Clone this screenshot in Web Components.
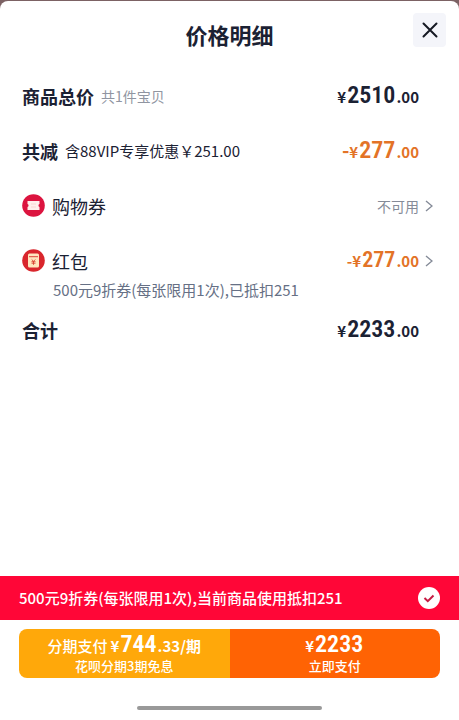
<!DOCTYPE html>
<html lang="zh-CN">
<head>
<meta charset="utf-8">
<meta name="viewport" content="width=device-width, initial-scale=1">
<title>价格明细</title>
<style>
html, body { height: 100%; margin: 0; }
body {
  background: #7c6264;
  color: #1b2133;
  font-family: "Noto Sans CJK SC", "Noto Sans", sans-serif;
  --num: "Liberation Sans Narrow", "Roboto Condensed", "Noto Sans CJK SC", sans-serif;
}
</style>
</head>
<body>
<price-sheet heading="价格明细">
  <price-row strong label="商品总价">
    <span slot="hint" class="muted">共1件宝贝</span>
    <money-text slot="value" whole="2510" cents=".00"></money-text>
  </price-row>
  <price-row strong label="共减">
    <span slot="hint">含88VIP专享优惠￥251.00</span>
    <money-text slot="value" discount sign="-" whole="277" cents=".00"></money-text>
  </price-row>
  <price-row label="购物券" link>
    <coupon-icon slot="icon"></coupon-icon>
    <span slot="value">不可用</span>
  </price-row>
  <price-row label="红包" link note="500元9折券(每张限用1次),已抵扣251">
    <packet-icon slot="icon"></packet-icon>
    <money-text slot="value" discount compact sign="-" whole="277" cents=".00"></money-text>
  </price-row>
  <price-row strong label="合计">
    <money-text slot="value" whole="2233" cents=".00"></money-text>
  </price-row>
  <coupon-banner slot="footer">500元9折券(每张限用1次),当前商品使用抵扣251</coupon-banner>
  <pay-bar slot="footer"></pay-bar>
</price-sheet>

<script>
class Base extends HTMLElement {
  connectedCallback() {
    if (!this.shadowRoot) this.attachShadow({ mode: "open" }).innerHTML = this.view();
  }
  at(name) { return this.getAttribute(name) || ""; }
}

customElements.define("money-text", class extends Base {
  view() {
    return `<style>
      :host { display: inline-flex; align-items: baseline; white-space: nowrap; color: var(--money, #1b2133);
        font-weight: 700; font-size: 15px; line-height: 24px; }
      :host([discount]) { color: #e37327; }
      .sign { font-size: 20px; }
      b { font-family: var(--num); font-size: 24px; font-weight: 600; margin-left: 1px; }
      :host([compact]) .sign { font-size: 15px; }
      :host([compact]) b { font-size: 22px; }
      .cents { margin-left: 1px; }
    </style>${this.at("sign") ? `<span class="sign">${this.at("sign")}</span>` : ""}<span>¥</span><b>${this.at("whole")}</b><span class="cents">${this.at("cents")}</span>`;
  }
});

customElements.define("coupon-icon", class extends Base {
  view() {
    return `<style>:host { display: block; } svg { display: block; }</style>
    <svg width="23" height="23" viewBox="0 0 23 23" aria-hidden="true">
      <circle cx="11.5" cy="11.5" r="11.3" fill="#dc143f"/>
      <path d="M5.5 7h12v3a1.6 1.6 0 0 0 0 3v3h-12v-3a1.6 1.6 0 0 0 0-3z" fill="#fff0ec"/>
      <path d="M9 10h5M9 13h5" stroke="#fad6d2" stroke-width="1"/>
    </svg>`;
  }
});

customElements.define("packet-icon", class extends Base {
  view() {
    return `<style>:host { display: block; } svg { display: block; }</style>
    <svg width="23" height="23" viewBox="0 0 23 23" aria-hidden="true">
      <circle cx="11.5" cy="11.5" r="11.3" fill="#d9262c"/>
      <rect x="6" y="4.5" width="11" height="14" rx="1.5" fill="#ffe6bd"/>
      <path d="M7 7.7h9" stroke="#d9463a" stroke-width="1"/>
      <path d="M9.7 10.5l1.8 1.8 1.8-1.8M11.5 12.3v3.5M9.5 12.7h4M9.5 14.2h4" fill="none" stroke="#d9402f" stroke-width=".9"/>
    </svg>`;
  }
});

customElements.define("price-row", class extends Base {
  view() {
    const link = this.hasAttribute("link");
    const tag = link ? "button" : "div";
    return `<style>
      :host { display: block; }
      .line { box-sizing: border-box; width: 100%; height: 55px; display: grid;
        grid-template-columns: minmax(0, 1fr) auto 8px; align-items: center; column-gap: 6px;
        padding: 0; border: 0; background: none; color: inherit; font: inherit; text-align: left; }
      button { cursor: pointer; }
      .left { display: flex; align-items: center; gap: 7px; white-space: nowrap; font-size: 18px; line-height: 26px; }
      :host([strong]) .label { font-weight: 700; }
      ::slotted([slot=hint]) { font-size: 15px; }
      ::slotted(.muted) { font-size: 14px; color: #9095a1; }
      ::slotted(span[slot=value]) { font-size: 14px; color: #858b98; }
      p { margin: -8px 0 0 31px; padding-bottom: 2px; font-size: 15px; line-height: 20px; color: #667085; }
      svg { display: block; }
    </style>
    <${tag} class="line">
      <span class="left"><slot name="icon"></slot><span class="label">${this.at("label")}</span><slot name="hint"></slot></span>
      <slot name="value"></slot>
      ${link ? `<svg width="8" height="12" viewBox="0 0 8 12" fill="none" stroke="#858b98" stroke-width="1.4" aria-hidden="true"><path d="M1 1l6 5-6 5"/></svg>` : ""}
    </${tag}>${this.at("note") ? `<p>${this.at("note")}</p>` : ""}`;
  }
});

customElements.define("coupon-banner", class extends Base {
  view() {
    return `<style>
      :host { display: block; background: #ff0637; color: #fff; }
      label { display: flex; align-items: center; justify-content: space-between; gap: 12px;
        min-height: 44px; padding: 0 19px; font-size: 15px; line-height: 22px; font-weight: 500; }
      input { appearance: none; flex: none; width: 22px; height: 22px; margin: 0; border-radius: 50%; background: #fff; }
      .tick { flex: none; display: grid; }
      .tick > * { grid-area: 1 / 1; }
      svg { pointer-events: none; visibility: hidden; }
      input:checked + svg { visibility: visible; }
    </style>
    <label><span><slot></slot></span>
      <span class="tick"><input type="checkbox" checked>
      <svg width="22" height="22" viewBox="0 0 22 22" fill="none" stroke="#c51b43" stroke-width="2" aria-hidden="true"><path d="M6.5 11l3.3 3.2 5.7-5.7"/></svg></span>
    </label>`;
  }
});

customElements.define("pay-bar", class extends Base {
  view() {
    return `<style>
      :host { display: block; padding: 9px 19px 10px; background: #fff; }
      .pay { display: grid; grid-template-columns: 1fr 1fr; border-radius: 8px; overflow: hidden; }
      button { display: flex; flex-direction: column; align-items: center; justify-content: center; height: 49px;
        border: 0; padding: 0 0 2px; box-sizing: border-box; color: #fff; --money: #fff; font: inherit; cursor: pointer; white-space: nowrap; }
      .later { background: #ffa80a; }
      .now { background: #ff6304; }
      .top { display: flex; align-items: baseline; gap: 3px; font-size: 15px; font-weight: 500; line-height: 24px; }
      .sub { font-size: 13px; line-height: 16px; font-weight: 500; }
      .home { width: 44%; height: 4px; margin: 28px auto 0; border-radius: 2px; background: #999; }
    </style>
    <div class="pay">
      <button class="later"><span class="top">分期支付<money-text whole="744" cents=".33/期"></money-text></span><span class="sub">花呗分期3期免息</span></button>
      <button class="now"><span class="top"><money-text whole="2233"></money-text></span><span class="sub">立即支付</span></button>
    </div>
    <div class="home"></div>`;
  }
});

customElements.define("price-sheet", class extends Base {
  view() {
    return `<style>
      :host { box-sizing: border-box; display: flex; min-height: 100%; padding-top: 1px; }
      section { flex: 1; min-width: 0; display: flex; flex-direction: column; background: #fff; border-radius: 8px 8px 0 0; overflow: hidden; }
      header { display: grid; grid-template-columns: 1fr auto 1fr; align-items: center; padding: 12px 13px 0; }
      h1 { grid-column: 2; margin: 6px 0 0; font-size: 22px; line-height: 30px; font-weight: 700; }
      button { justify-self: end; align-self: start; display: grid; place-items: center; width: 33px; height: 34px; padding: 0; border: 0; border-radius: 4px; background: #f4f5fa; cursor: pointer; }
      main { flex: 1; padding: 19px 26px 0 22px; }
    </style>
    <section>
      <header><h1>${this.at("heading")}</h1>
        <button aria-label="关闭"><svg width="16" height="16" viewBox="0 0 16 16" fill="none" stroke="#151923" stroke-width="2" stroke-linecap="round" aria-hidden="true"><path d="M1.5 1.5l13 13M14.5 1.5l-13 13"/></svg></button>
      </header>
      <main><slot></slot></main>
      <footer><slot name="footer"></slot></footer>
    </section>`;
  }
});
</script>
</body>
</html>
